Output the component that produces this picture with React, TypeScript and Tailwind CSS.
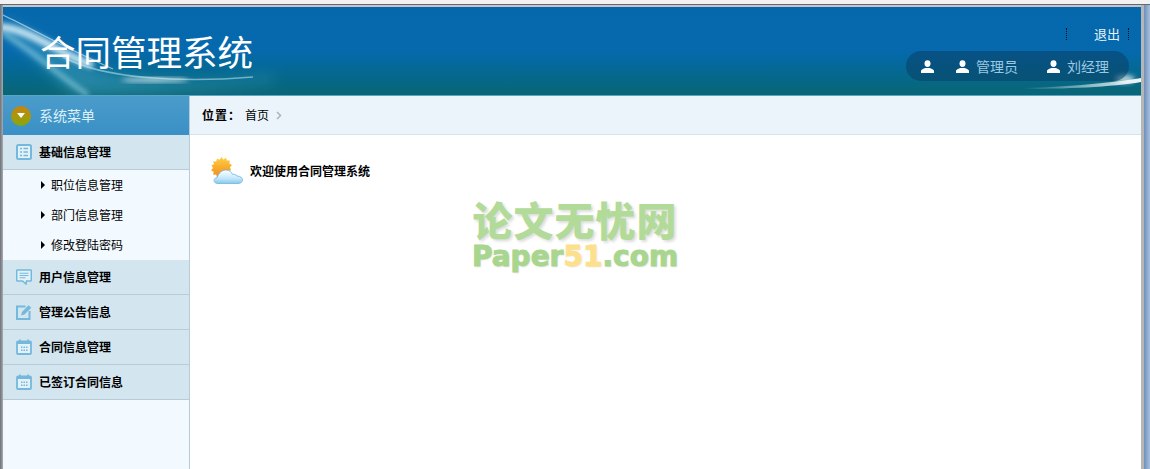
import type { ReactNode } from 'react';

const CJK = 'font-["Noto_Sans_CJK_SC","Liberation_Sans",sans-serif]';

function UserIcon() {
  return (
    <svg width="13" height="13" viewBox="0 0 13 13" fill="#fff">
      <ellipse cx="6.5" cy="3.6" rx="3" ry="3.4" />
      <path d="M0 13v-2.2c0-1.3 2.6-2 4.4-2.8h4.2c1.800.8 4.400 1.500 4.400 2.800V13z" />
    </svg>
  );
}

function ListIcon() {
  return (
    <svg width="16" height="16" viewBox="0 0 16 16">
      <rect x="1" y="1" width="14" height="14" rx="1.500" fill="#e3f1f8" stroke="#74b8dc" strokeWidth="2" />
      <path d="M4 4.500h2M4 8h2M4 11.500h2M7.500 4.500H12M7.500 8H12M7.500 11.500H12" stroke="#74b8dc" strokeWidth="1.600" />
    </svg>
  );
}

function ChatIcon() {
  return (
    <svg width="16" height="16" viewBox="0 0 16 16">
      <path d="M1.500 1h13a.8.8 0 0 1 .8.8v9.400a.8.8 0 0 1-.8.8H10.500L10 15l-3.500-3H1.500a.8.8 0 0 1-.8-.8V1.800a.8.8 0 0 1 .8-.8z" fill="#e3f1f8" stroke="#74b8dc" strokeWidth="1.500" />
      <path d="M3.500 4.200h9M3.500 6.500h9M3.500 8.800h6" stroke="#74b8dc" strokeWidth="1.100" />
    </svg>
  );
}

function EditIcon() {
  return (
    <svg width="16" height="16" viewBox="0 0 16 16">
      <path d="M9.500 2.500H1v12.500h12.500V7" fill="none" stroke="#74b8dc" strokeWidth="2" />
      <path d="M5 11.500l1-3.500L12.500 1.200l2.800 2.600L8.500 10.500z" fill="#74b8dc" />
    </svg>
  );
}

function CalendarIcon() {
  return (
    <svg width="16" height="16" viewBox="0 0 16 16">
      <rect x="1" y="2.500" width="14" height="12.500" rx="1" fill="#e3f1f8" stroke="#74b8dc" strokeWidth="1.800" />
      <rect x="1" y="2.500" width="14" height="2.500" fill="#74b8dc" />
      <path d="M4 .5v3M12 .5v3" stroke="#74b8dc" strokeWidth="1.600" />
      <path d="M5 7.500h1.500v1.500H5zM7.500 7.500H9v1.500H7.500zM10 7.500h1.500v1.500H10zM5 10.500h1.500V12H5zM7.500 10.500H9V12H7.500zM10 10.500h1.500V12H10z" fill="#74b8dc" />
    </svg>
  );
}

function WeatherIcon() {
  return (
    <svg width="32" height="28" viewBox="0 0 32 28">
      <defs>
        <linearGradient id="sun" x1="0" y1="0" x2="0" y2="1">
          <stop offset="0" stopColor="#ffcf45" />
          <stop offset="1" stopColor="#f08a16" />
        </linearGradient>
        <linearGradient id="cloud" x1="0" y1="0" x2="0" y2="1">
          <stop offset="0" stopColor="#ffffff" />
          <stop offset=".6" stopColor="#c6e8fa" />
          <stop offset="1" stopColor="#85c9ee" />
        </linearGradient>
      </defs>
      <path d="M10.500 0l1.800 2.400L15 .8l.8 2.800 3-.2-.5 3 2.700 1.500-2 2.400 1 3-2.800.8-.4 3-3-.6L12 19l-1.500 2-2-1.800L6 20.500l-.8-3-3 .2.500-3L0 13.500l2-2.400L.5 8.300l2.500-1L2.200 4.300l3 .2L6 1.500l2.500 1.300z" fill="url(#sun)" />
      <path d="M7 26.500c-3 0-4-1.800-4-3 0-1.600 1.400-2.800 3-2.800C7.500 16 11 13 15 13c3.500 0 5.500 2 6.500 4.500 1.500-.6 3.500 0 4.500 1.500 3 0 5.500 1.500 5.500 3.800 0 2-1.700 3.700-4.500 3.700z" fill="url(#cloud)" stroke="#6fb6dc" strokeWidth=".8" />
    </svg>
  );
}

function MenuGroup({ icon, label }: { icon: ReactNode; label: string }) {
  return (
    <div className="flex items-center gap-[7px] pl-[13px] h-[35px] bg-[#d3e5ef] border-b border-[#b7cbd8]">
      {icon}
      <span className="text-[12px] font-bold text-black">{label}</span>
    </div>
  );
}

function SubItem({ label }: { label: string }) {
  return (
    <div className="h-[30px] flex items-center pl-[38px] text-[12px] text-black">
      <span className="mr-[6px] w-0 h-0 border-y-[4px] border-y-transparent border-l-[4px] border-l-black" />
      {label}
    </div>
  );
}

export default function App() {
  return (
    <div className={`${CJK} relative w-[1150px] h-[469px] overflow-hidden bg-white flex flex-col`}>
      {/* window chrome */}
      <div className="h-[4px] bg-[#f2f2f2] shrink-0" />
      <div className="h-[1px] bg-[#666a70] shrink-0" />
      <div className="flex-1 flex min-h-0">
        <div className="w-[3px] shrink-0 bg-gradient-to-r from-[#6d7278] to-[#a9acb0]" />
        <div className="flex-1 min-w-0 flex flex-col">
          <div className="h-[2px] bg-[#c4c6c8] shrink-0" />

          {/* header */}
          <header className="relative h-[88px] shrink-0 overflow-hidden bg-gradient-to-b from-[#0668ac] via-[#0669ad] via-50% to-[#0a6674]">
            <svg className="absolute inset-0" width="1138" height="88" viewBox="0 0 1138 88">
              <defs>
                <filter id="soft" x="-20%" y="-50%" width="140%" height="200%">
                  <feGaussianBlur stdDeviation="2.500" />
                </filter>
                <filter id="softer" x="-20%" y="-50%" width="140%" height="200%">
                  <feGaussianBlur stdDeviation="7" />
                </filter>
                <linearGradient id="tail" x1="0" y1="0" x2="1" y2="0">
                  <stop offset="0" stopColor="#ffffff" stopOpacity="0" />
                  <stop offset="1" stopColor="#ffffff" stopOpacity=".95" />
                </linearGradient>
              </defs>
              <path d="M0 12C40 30 60 52 110 66c50 10 110 10 160 2v6C210 84 110 88 70 88 45 66 25 40 0 28z" fill="#3fa2c2" fillOpacity=".5" filter="url(#softer)" />
              <path d="M-4 20C30 22 60 50 90 58" stroke="#e6f8fd" strokeOpacity=".8" strokeWidth="8" fill="none" filter="url(#soft)" />
              <path d="M0 26C30 44 55 68 85 88" stroke="#9ad8e8" strokeOpacity=".6" strokeWidth="5" fill="none" filter="url(#soft)" />
              <path d="M0 8C30 22 60 40 110 62" stroke="#d8f2fb" strokeOpacity=".6" strokeWidth="1.200" fill="none" />
              <path d="M60 50C100 72 180 76 250 70" stroke="#bfeaf5" strokeOpacity=".55" strokeWidth="1.500" fill="none" />
              <ellipse cx="152" cy="73" rx="34" ry="2" fill="#fff" fillOpacity=".8" filter="url(#soft)" />
              <path d="M1020 81C1060 80 1110 76 1138 71v4C1110 80 1060 82 1020 82z" fill="url(#tail)" />
              <ellipse cx="1122" cy="72" rx="10" ry="4" fill="#fff" fillOpacity=".7" filter="url(#soft)" />
            </svg>
            <h1 className="absolute left-[37px] top-[18px] text-[35.500px] leading-[52px] text-white font-normal">合同管理系统</h1>
            <div className="absolute top-[18px] right-[12px] flex items-center text-[13px] leading-[17px] text-[#e8f4fb]">
              <span className="h-[12px] border-l border-dotted border-[#111]" />
              <span className="ml-[27px] mr-[8px]">退出</span>
              <span className="h-[12px] border-l border-dotted border-[#111]" />
            </div>
            <div className="absolute left-[903px] top-[44px] w-[223px] h-[30px] rounded-[15px] bg-[#0a3f66]/55 flex items-center pl-[15px] text-[14px] text-[#9cc9e2]">
              <UserIcon />
              <span className="ml-[22px] flex items-center gap-[7px]"><UserIcon />管理员</span>
              <span className="ml-[29px] flex items-center gap-[7px]"><UserIcon />刘经理</span>
            </div>
          </header>

          <div className="h-[1px] bg-[#5aa5cc] shrink-0" />

          {/* body */}
          <div className="flex-1 flex min-h-0">
            <aside className="w-[187px] shrink-0 bg-[#f2faff] border-r border-[#b7cbd8]">
              <div className="h-[39px] flex items-center gap-[8px] pl-[8px] bg-gradient-to-b from-[#4a9cca] to-[#3a90c5]">
                <span className="w-[20px] h-[20px] rounded-full bg-gradient-to-b from-[#c8820f] to-[#84a70c] flex items-center justify-center">
                  <span className="w-0 h-0 border-x-[4px] border-x-transparent border-t-[5px] border-t-white" />
                </span>
                <span className="text-[14px] text-[#dcf0fa]">系统菜单</span>
              </div>
              <MenuGroup icon={<ListIcon />} label="基础信息管理" />
              <SubItem label="职位信息管理" />
              <SubItem label="部门信息管理" />
              <SubItem label="修改登陆密码" />
              <MenuGroup icon={<ChatIcon />} label="用户信息管理" />
              <MenuGroup icon={<EditIcon />} label="管理公告信息" />
              <MenuGroup icon={<CalendarIcon />} label="合同信息管理" />
              <MenuGroup icon={<CalendarIcon />} label="已签订合同信息" />
            </aside>

            <main className="flex-1 min-w-0 flex flex-col">
              <div className="h-[39px] shrink-0 flex items-center pl-[12px] bg-[#ecf4fb] border-b border-[#d8e2ea] text-[12px] text-black">
                <span className="font-bold tracking-[1px]">位置：</span>
                <span className="ml-[4px]">首页</span>
                <svg className="ml-[7px]" width="6" height="9" viewBox="0 0 6 9">
                  <path d="M1 1l3.500 3.500L1 8" fill="none" stroke="#a9b6c0" strokeWidth="1.500" />
                </svg>
              </div>
              <div className="flex items-center pl-[21px] pt-[22px]">
                <WeatherIcon />
                <span className="ml-[7px] text-[12px] font-bold text-black">欢迎使用合同管理系统</span>
              </div>
            </main>
          </div>
        </div>
        <div className="w-[9px] shrink-0 flex">
          <div className="w-[3px] bg-[#b4b6b8]" />
          <div className="w-[6px] bg-gradient-to-r from-[#6f8fb8] to-[#a7c0e0]" />
        </div>
      </div>

      {/* watermark */}
      <div className="absolute left-[471px] top-[197px] w-[208px] pointer-events-none select-none text-center">
        <div className="text-[40px] leading-[44px] font-black text-[#b2db99] tracking-[1px] whitespace-nowrap [text-shadow:2px_2px_3px_#dcdcdc]">论文无忧网</div>
        <div className="font-['DejaVu_Sans'] text-[28px] leading-[32px] font-bold text-[#a9d68e] [-webkit-text-stroke-width:1px] whitespace-nowrap [text-shadow:1px_1px_2px_#e0e0e0]">
          Paper<span className="text-[#fde08c]">51</span>.com
        </div>
      </div>
    </div>
  );
}
